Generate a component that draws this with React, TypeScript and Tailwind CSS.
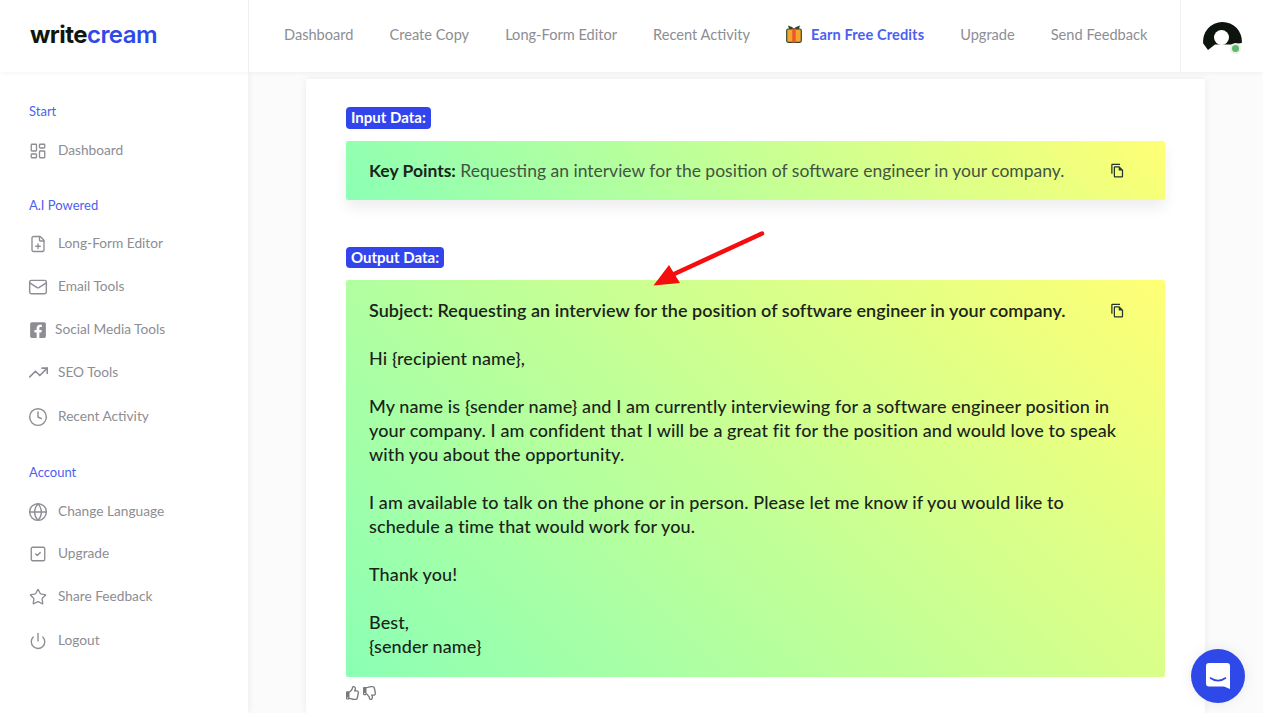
import { Clock, FilePlus, Globe, LayoutDashboard, Mail, Power, SquareCheck, Star, TrendingUp } from "lucide-react"
import { FaFacebookSquare, FaRegThumbsDown, FaRegThumbsUp } from "react-icons/fa"
import { MdOutlineFileCopy } from "react-icons/md"

const navLinks = ["Dashboard", "Create Copy", "Long-Form Editor", "Recent Activity"]

function SideItem({ icon, label, tight }: { icon: React.ReactNode; label: string; tight?: boolean }) {
    return (
        <a className="flex h-[43px] items-center text-[13.7px] text-[#8d8d93]">
            <span className={tight ? "flex w-[26px] justify-center pr-[9px]" : "flex w-[29px] justify-center pr-[11px]"}>{icon}</span>
            <span>{label}</span>
        </a>
    )
}

function SideLabel({ children, className }: { children: string; className: string }) {
    return <div className={`flex h-5 items-center text-[13px] text-[#4d61f0] ${className}`}>{children}</div>
}

function GiftIcon() {
    return (
        <svg width="16" height="18" viewBox="0 0 16 18">
            <path d="M3 4 L2 0.5 L6 2 L8 3.5 L10 2 L14 0.5 L13 4 Z" fill="#33482f" />
            <rect x="0.7" y="4" width="14.6" height="13.3" rx="1.5" fill="#f7a52a" stroke="#33482f" strokeWidth="1.2" />
            <rect x="6.3" y="3.5" width="3.4" height="14" fill="#e9572c" />
        </svg>
    )
}

function Avatar() {
    return (
        <div className="relative h-[30px] w-[39px]">
            <svg width="39" height="30" viewBox="0 0 39 30">
                <path d="M0.2 22.5 A19.4 19.4 0 1 1 38.8 22 L28 23.5 L12 23.5 L5 29 Z" fill="#0d140d" />
                <circle cx="18.5" cy="16.5" r="7.5" fill="#fff" />
            </svg>
            <span className="absolute -bottom-[3px] right-[1px] h-[11px] w-[11px] rounded-full border-2 border-[#e9f1e9] bg-[#5fb86a]" />
        </div>
    )
}

function RedArrow() {
    return (
        <svg className="absolute left-[650px] top-[228px]" width="120" height="62" viewBox="650 228 120 62">
            <line x1="762" y1="233.5" x2="672" y2="275" stroke="#f60d0d" strokeWidth="4.5" strokeLinecap="round" />
            <polygon points="669,265 680,283 653.5,285.5" fill="#f60d0d" />
        </svg>
    )
}

function ChatButton() {
    return (
        <button className="absolute left-[1191px] top-[649px] flex h-[54px] w-[54px] items-center justify-center rounded-full bg-[#2f49e8] shadow-[0_0_14px_rgba(0,0,0,0.08)]">
            <svg width="26" height="28" viewBox="0 0 26 28">
                <path d="M4 1 H22 A3 3 0 0 1 25 4 V27 L19 24.5 H4 A3 3 0 0 1 1 21.5 V4 A3 3 0 0 1 4 1 Z" fill="#fff" />
                <path d="M5.5 16 C10 19.5 16 19.5 20.5 16" stroke="#2f49e8" strokeWidth="1.6" fill="none" strokeLinecap="round" />
            </svg>
        </button>
    )
}

export default function App() {
    const iconCls = "h-[18px] w-[18px] shrink-0"
    const bigIconCls = "h-[20px] w-[20px] shrink-0"

    return (
        <div className="relative flex h-screen flex-col overflow-hidden bg-[#fbfbfb] font-['Lato',sans-serif]">
            <header className="z-10 flex h-[72px] shrink-0 bg-white shadow-[0_1px_4px_rgba(0,0,0,0.05)]">
                <div className="flex w-[249px] shrink-0 items-center border-r border-[#efefef] pb-[2px] pl-[30px]">
                    <span className="font-['Inter',sans-serif] text-[24px] font-bold leading-none tracking-[-0.55px] text-[#0e160e]">
                        write<span className="font-semibold text-[#2f49e8]">cream</span>
                    </span>
                </div>
                <nav className="flex flex-1 items-center gap-9 pb-[3px] pl-[35px] text-[14.6px] text-[#8d8d93]">
                    {navLinks.map((link) => (
                        <a key={link}>{link}</a>
                    ))}
                    <a className="flex items-center gap-[9px] font-bold tracking-[0.1px] text-[#4d61f0]">
                        <GiftIcon />
                        Earn Free Credits
                    </a>
                    <a>Upgrade</a>
                    <a>Send Feedback</a>
                </nav>
                <div className="flex w-[83px] shrink-0 items-center justify-center border-l border-[#efefef]">
                    <Avatar />
                </div>
            </header>

            <div className="flex min-h-0 flex-1">
                <aside className="w-[248px] shrink-0 bg-white pl-[29px] pt-[29px] shadow-[2px_0_6px_rgba(0,0,0,0.05)]">
                    <SideLabel className="mb-2 translate-y-px">Start</SideLabel>
                    <SideItem icon={<LayoutDashboard className={iconCls} strokeWidth={1.8} />} label="Dashboard" />
                    <SideLabel className="mb-[7px] mt-[23px] translate-y-px">A.I Powered</SideLabel>
                    <SideItem icon={<FilePlus className={iconCls} strokeWidth={1.8} />} label="Long-Form Editor" />
                    <SideItem icon={<Mail className={bigIconCls} strokeWidth={1.7} />} label="Email Tools" />
                    <SideItem tight icon={<FaFacebookSquare className={iconCls} />} label="Social Media Tools" />
                    <SideItem icon={<TrendingUp className="h-[21px] w-[21px] shrink-0" strokeWidth={1.8} />} label="SEO Tools" />
                    <div className="mt-px">
                        <SideItem icon={<Clock className={bigIconCls} strokeWidth={1.7} />} label="Recent Activity" />
                    </div>
                    <SideLabel className="mb-2 mt-6 translate-y-px">Account</SideLabel>
                    <SideItem icon={<Globe className={bigIconCls} strokeWidth={1.7} />} label="Change Language" />
                    <div className="-mt-px">
                        <SideItem icon={<SquareCheck className={iconCls} strokeWidth={1.8} />} label="Upgrade" />
                    </div>
                    <SideItem icon={<Star className={iconCls} strokeWidth={1.8} />} label="Share Feedback" />
                    <div className="mt-px">
                        <SideItem icon={<Power className={iconCls} strokeWidth={1.8} />} label="Logout" />
                    </div>
                </aside>

                <main className="flex-1 overflow-hidden px-[58px] pt-[7px]">
                    <div className="h-full bg-white px-10 pt-[28px] leading-6 text-[#1b241b] shadow-[0_0_8px_rgba(0,0,0,0.07)]">
                        <div className="h-[22px] w-fit rounded-[4px] bg-[#3245ec] px-[5px] text-[15px] font-bold leading-[21px] text-white">
                            Input Data:
                        </div>
                        <div className="mt-3 flex h-[59px] items-center justify-between rounded-[2px] bg-[linear-gradient(45deg,#8bffb5,#ffff75)] pl-[23px] pr-[40px] text-[17.5px] shadow-[0_8px_14px_rgba(0,0,0,0.07)]">
                            <p className="text-[#445342]">
                                <b className="text-[#1b241b]">Key Points:</b> Requesting an interview for the position of software engineer in your company.
                            </p>
                            <MdOutlineFileCopy className="h-[15px] w-[15px] text-[#24352a]" />
                        </div>

                        <div className="mt-[47px] h-[21px] w-fit rounded-[4px] bg-[#3245ec] px-[5px] text-[15px] font-bold leading-[20px] text-white">
                            Output Data:
                        </div>
                        <div className="mt-3 flex h-[397px] items-start justify-between rounded-[2px] bg-[linear-gradient(45deg,#8bffb5,#ffff75)] pb-[17px] pl-[23px] pr-[40px] pt-[18px] text-[18px] tracking-[0.1px]">
                            <div className="w-[700px] shrink-0 whitespace-nowrap font-medium">
                                <p className="mb-6 font-semibold tracking-[0.035px]">Subject: Requesting an interview for the position of software engineer in your company.</p>
                                <p className="mb-6">Hi {"{recipient name}"},</p>
                                <p className="mb-6">
                                    My name is {"{sender name}"} and I am currently interviewing for a software engineer position in
                                    <br />
                                    your company. I am confident that I will be a great fit for the position and would love to speak
                                    <br />
                                    with you about the opportunity.
                                </p>
                                <p className="mb-6">
                                    I am available to talk on the phone or in person. Please let me know if you would like to
                                    <br />
                                    schedule a time that would work for you.
                                </p>
                                <p className="mb-6">Thank you!</p>
                                <p>
                                    Best,
                                    <br />
                                    {"{sender name}"}
                                </p>
                            </div>
                            <MdOutlineFileCopy className="mt-[5px] h-[15px] w-[15px] shrink-0 text-[#24352a]" />
                        </div>
                        <div className="mt-[9px] flex gap-[3px] text-[#77797b]">
                            <FaRegThumbsUp className="h-[14px] w-[14px]" />
                            <FaRegThumbsDown className="h-[14px] w-[14px]" />
                        </div>
                    </div>
                </main>
            </div>

            <RedArrow />
            <ChatButton />
        </div>
    )
}
